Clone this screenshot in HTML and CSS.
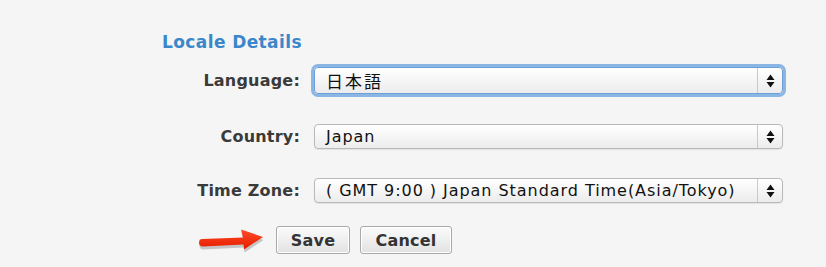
FILE: index.html
```html
<!DOCTYPE html>
<html lang="ja">
<head>
<meta charset="utf-8">
<title>Locale Details</title>
<link rel="stylesheet" href="styles.css">
</head>
<body>
<div class="page">
  <h2 class="section-title">Locale Details</h2>
  <div class="form">
    <div class="row">
      <label class="label">Language:</label>
      <div class="select focused">
        <span class="value cjk">日本語</span>
        <span class="stepper"><svg width="9" height="14" viewBox="0 0 9 14"><path d="M4.5 0.5 L8.5 6 H0.5 Z M4.5 13.5 L8.5 8 H0.5 Z" fill="#111"/></svg></span>
      </div>
    </div>
    <div class="row country">
      <label class="label">Country:</label>
      <div class="select">
        <span class="value">Japan</span>
        <span class="stepper"><svg width="9" height="14" viewBox="0 0 9 14"><path d="M4.5 0.5 L8.5 6 H0.5 Z M4.5 13.5 L8.5 8 H0.5 Z" fill="#111"/></svg></span>
      </div>
    </div>
    <div class="row">
      <label class="label">Time Zone:</label>
      <div class="select">
        <span class="value">( GMT 9:00 ) Japan Standard Time(Asia/Tokyo)</span>
        <span class="stepper"><svg width="9" height="14" viewBox="0 0 9 14"><path d="M4.5 0.5 L8.5 6 H0.5 Z M4.5 13.5 L8.5 8 H0.5 Z" fill="#111"/></svg></span>
      </div>
    </div>
  </div>
  <div class="actions">
    <svg class="pointer" width="72" height="28" viewBox="0 0 72 28">
      <defs>
        <linearGradient id="rg" x1="0" y1="0" x2="0" y2="1">
          <stop offset="0" stop-color="#ff4a26"/>
          <stop offset="1" stop-color="#e51d00"/>
        </linearGradient>
      </defs>
      <path d="M6 13 L47 11.5 L45 3.5 L67 11 L48 23.5 L47.5 18.5 L7 20.5 Q3 20.5 3 16.8 Q3 13 6 13 Z" fill="#555" opacity="0.3" transform="translate(0.5,2)"/>
      <path d="M6 12 L47 10.5 L45 2.5 L67 10 L48 22.5 L47.5 17.5 L7 19.5 Q3 19.5 3 15.8 Q3 12 6 12 Z" fill="url(#rg)"/>
    </svg>
    <button class="btn save">Save</button>
    <button class="btn cancel">Cancel</button>
  </div>
</div>
</body>
</html>
```

FILE: styles.css
```css
html, body {
  margin: 0;
  padding: 0;
  background: #f5f5f5;
}
.page {
  padding: 31px 0 0 162px;
  font-family: "DejaVu Sans", Verdana, sans-serif;
  position: relative;
}
.section-title {
  margin: 0 0 14px 0;
  font-size: 17px;
  letter-spacing: 0.4px;
  font-weight: bold;
  color: #3b87c9;
  line-height: 22px;
}
.form {
  display: flex;
  flex-direction: column;
  gap: 29px;
}
.row {
  display: flex;
  align-items: center;
}
.row.country {
  margin-top: 1px;
}
.label {
  width: 138px;
  text-align: right;
  font-size: 16px;
  letter-spacing: 0.2px;
  font-weight: bold;
  color: #3a3a3a;
  margin-right: 14px;
}
.select {
  width: 469px;
  height: 25px;
  box-sizing: border-box;
  border: 1px solid #b9b9b9;
  border-radius: 4px;
  background: linear-gradient(#ffffff, #ececec);
  display: flex;
  align-items: center;
  box-shadow: 0 1px 1px rgba(0,0,0,0.08);
}
.select.focused {
  height: 27px;
  border-color: #6e9fd6;
  box-shadow: 0 0 0 3px #8ab6e6;
}
.value {
  flex: 1;
  padding-left: 11px;
  font-size: 16px;
  letter-spacing: 0.95px;
  color: #111;
  font-family: "DejaVu Sans", "Noto Sans CJK JP", sans-serif;
  white-space: nowrap;
}
.value.cjk {
  font-size: 17px;
  letter-spacing: 2px;
}
.stepper {
  width: 24px;
  height: 100%;
  border-left: 1px solid #c9c9c9;
  display: flex;
  align-items: center;
  justify-content: center;
}
.actions {
  margin-top: 23px;
  padding-left: 114px;
  display: flex;
  gap: 10px;
  position: relative;
}
.pointer {
  position: absolute;
  left: 34px;
  top: 1px;
}
.btn {
  height: 28px;
  padding: 0;
  font-family: "DejaVu Sans", Verdana, sans-serif;
  font-size: 16px;
  letter-spacing: 0.2px;
  font-weight: bold;
  color: #333;
  border: 1px solid #a9a9a9;
  border-radius: 3px;
  background: linear-gradient(#fbfbfb, #e2e2e2);
  box-shadow: inset 0 0 0 1px #fff;
}
.btn.save {
  width: 74px;
}
.btn.cancel {
  width: 92px;
}
```
